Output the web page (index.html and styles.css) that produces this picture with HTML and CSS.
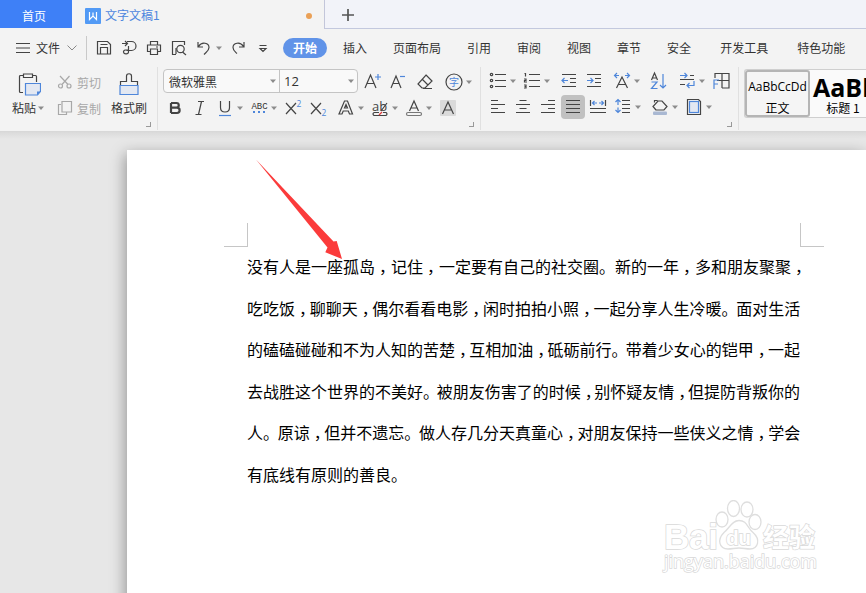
FILE: index.html
```
<!DOCTYPE html>
<html lang="zh-CN">
<head>
    <meta charset="UTF-8">
    <meta name="viewport" content="width=device-width, initial-scale=1.0">
    <title>文字文稿1</title>
    <link rel="stylesheet" href="styles.css">
</head>
<body>
    <svg class="defs">
        <symbol id="caret" viewBox="0 0 9 22"><path d="M1 9.5h6l-3 3.5z" fill="#8c8c8c"/></symbol>
    </svg>

    <div class="tabs">
        <div class="home">首页</div>
        <div class="doc-tab">
            <svg class="logo" viewBox="0 0 16 16"><rect width="16" height="16" rx="1" fill="#529af5"/><path d="M4.500 4v7.500l3.500-3.500 3.500 3.500V4M8 4.500V8" fill="none" stroke="#fff" stroke-width="1.2"/></svg>
            <span>文字文稿1</span>
            <i class="dot"></i>
        </div>
        <div class="tab-rest">
            <svg class="plus" viewBox="0 0 12 12"><path d="M6 0v12M0 6h12" stroke="#555" stroke-width="1.7"/></svg>
        </div>
    </div>

    <div class="menu">
        <svg class="burger" viewBox="0 0 14 10"><path d="M0 .5h14M0 5h14M0 9.5h14" stroke="#444"/></svg>
        <span class="file">文件</span>
        <svg class="chev" viewBox="0 0 10 6"><path d="M.5.5L5 5 9.5.5" fill="none" stroke="#888"/></svg>
        <i class="bar"></i>
        <div class="icons quick">
            <svg viewBox="0 0 22 22"><path d="M4.500 4.500h10l3 3v9.500h-13zM7.500 17v-6.500h7V17M7.500 7.500h7"/></svg>
            <svg viewBox="0 0 22 22"><path d="M4 6.500h5M7 4l2.500 2.500L7 9M9 4.500h4.500a4 4 0 0 1 0 9H8.500M10.500 9v6a2.500 2 0 1 1-3-2h3"/></svg>
            <svg viewBox="0 0 22 22"><path d="M7.500 8V4.500h7V8M7 14.500H4.500V8h13v6.500H15M7.500 12h7v5.500h-7zM13 10h2"/></svg>
            <svg viewBox="0 0 22 22"><path d="M8 17.500H4.500v-13h12V8M14.500 15l3.500 3M8 17v-6"/><circle cx="12.500" cy="12" r="3.700"/></svg>
            <svg class="undo" viewBox="0 0 22 22"><path d="M5 5v5h5M5.500 9.500C9 4 16 6 16 10.500c0 3-2 4-5 7"/></svg>
            <svg class="caret"><use href="#caret"/></svg>
            <svg class="redo" viewBox="0 0 22 22"><path d="M17 5v5h-5M16.500 9.500C13 4 6 6 6 10.500c0 3 2 4 4 6"/></svg>
            <svg viewBox="0 0 22 22"><path d="M7.500 8.500h7M8 11.500h6l-3 3z"/></svg>
        </div>
        <div class="nav">
            <span class="on">开始</span><span>插入</span><span>页面布局</span><span>引用</span><span>审阅</span><span>视图</span><span>章节</span><span>安全</span><span class="dev">开发工具</span><span class="feat">特色功能</span>
        </div>
    </div>

    <div class="ribbon">
        <div class="group clip">
            <div class="big">
                <svg viewBox="0 0 24 24"><path d="M6 3.500H3.500a1 1 0 0 0-1 1v15a1 1 0 0 0 1 1H6M16 3.500h2.500a1 1 0 0 1 1 1V10M6.500 2h9v3.500h-9z"/><path d="M8.500 11.500h15v8l-3 3.500h-12z" fill="#e3e8f2" stroke="#4e86da"/><path d="M20 23v-3.500h3.500z" fill="#4e86da" stroke="none"/></svg>
                <span>粘贴<svg class="caret"><use href="#caret"/></svg></span>
            </div>
            <div class="small">
                <div><svg viewBox="0 0 16 16"><circle cx="3.500" cy="12" r="2"/><circle cx="12" cy="12" r="2"/><path d="M5 10.500L12.500 2M11 10.500L3 2"/></svg>剪切</div>
                <div><svg viewBox="0 0 16 16"><path d="M4 4.500H1.500v10h8V12M5 1.500h9.500V12H5z"/></svg>复制</div>
            </div>
            <div class="big brush">
                <svg viewBox="0 0 24 24"><path d="M3.500 13V9.500h6V4c0-3 5-3 5 0v5.500h6V13"/><path d="M3 13.500h18v9H3z" fill="#e3e8f2" stroke="#4e86da"/></svg>
                <span>格式刷</span>
            </div>
            <i class="launch"></i>
        </div>

        <div class="group font">
            <div class="row">
                <div class="combo">
                    <span class="name">微软雅黑<svg class="caret"><use href="#caret"/></svg></span>
                    <span class="size">12<svg class="caret"><use href="#caret"/></svg></span>
                </div>
                <div class="icons sizes">
                    <svg viewBox="0 0 22 22"><path d="M3 17L8.500 4 14 17M5 12.500h7"/><path class="b" d="M16 3v6M13 6h6"/></svg>
                    <svg viewBox="0 0 22 22"><path d="M3 17L8 5l5 12M5 12.500h6"/><path class="b" d="M12 5.500h5"/></svg>
                    <svg viewBox="0 0 22 22"><path d="M12 4l6 6-7 7H8l-4-4zM8 8l6 6M9 17.500h9"/></svg>
                    <svg class="ring" viewBox="0 0 22 22"><circle cx="11" cy="11" r="8"/><text class="zi" x="11" y="14.800">字</text></svg>
                    <svg class="caret"><use href="#caret"/></svg>
                </div>
            </div>
            <div class="row icons">
                <svg viewBox="0 0 22 22"><path d="M7 6v10M7 6h5.500c3 0 3 4.700 0 4.700H7h6c3.500 0 3.500 5.300 0 5.300H7" stroke-width="2.200"/></svg>
                <svg viewBox="0 0 22 22"><path d="M9 4.500h6M12.500 4.500l-3 13M6.500 17.500h6"/></svg>
                <svg viewBox="0 0 22 22"><path d="M6.500 4v6.500c0 6 9 6 9 0V4"/><path class="b" d="M5 18.500h12"/></svg>
                <svg class="caret"><use href="#caret"/></svg>
                <svg viewBox="0 0 22 22"><text class="abc" x="11.500" y="12">ABC</text><path class="b dash" d="M5 15h13"/></svg>
                <svg class="caret"><use href="#caret"/></svg>
                <svg viewBox="0 0 22 22"><path d="M4 6l10 11M14 6L4 17"/><text class="sup" x="14.500" y="10">2</text></svg>
                <svg viewBox="0 0 22 22"><path d="M4 6l10 11M14 6L4 17"/><text class="sup" x="14.500" y="18.500">2</text></svg>
                <svg class="push" viewBox="0 0 22 22"><path d="M9.500 4h3l5 13h-3l-1.200-3H8.200L7 17H4zM9.500 11h3L11 7.500z"/></svg>
                <svg class="caret"><use href="#caret"/></svg>
                <svg viewBox="0 0 22 22"><text class="ab" x="3" y="14">ab</text><path d="M18 6l-6 8M5 15.500h5M14 15.500h3q2 1.500 0 3H5q-2-1.500 0-3" /><path d="M10 18l3-3" stroke="#e23d3d"/></svg>
                <svg class="caret"><use href="#caret"/></svg>
                <svg viewBox="0 0 22 22"><path d="M6.500 14L11 4l4.500 10M8 11h6"/><rect x="3.500" y="15.500" width="15" height="3" rx="1.500" stroke="#777"/></svg>
                <svg class="caret"><use href="#caret"/></svg>
                <svg viewBox="0 0 22 22"><rect x="3" y="3" width="16" height="16" rx="1" fill="#dadada" stroke="none"/><path d="M5.500 17L11 5l5.500 12M7.500 13h7"/></svg>
            </div>
            <i class="launch"></i>
        </div>

        <div class="group para">
            <div class="row icons">
                <svg viewBox="0 0 22 22"><path d="M8 4.500h11M8 10.500h11M8 16.500h11"/><circle cx="4.500" cy="4.500" r="1.200"/><circle cx="4.500" cy="10.500" r="1.200"/><circle cx="4.500" cy="16.500" r="1.200"/></svg>
                <svg class="caret"><use href="#caret"/></svg>
                <svg viewBox="0 0 22 22"><path d="M8 4.500h11M8 10.500h11M8 16.500h11M3.500 3.500h1v3M3 9h2v1.500H3.500V12H6M3 15h2v3H3M3.500 16.500H5"/></svg>
                <svg class="caret"><use href="#caret"/></svg>
                <svg class="push" viewBox="0 0 22 22"><path d="M4 4.500h14M12 8.500h6M12 12.500h6M4 16.500h14"/><path class="b" d="M10 10.500H4M6.500 8L4 10.500 6.500 13"/></svg>
                <svg viewBox="0 0 22 22"><path d="M4 4.500h14M12 8.500h6M12 12.500h6M4 16.500h14"/><path class="b" d="M4 10.500h6M7.500 8l2.500 2.500L7.500 13"/></svg>
                <svg class="push" viewBox="0 0 22 22"><path d="M5.500 18L11 7l5.500 11M7.500 14.500h7"/><path class="b" d="M8 5.500H3.500M6 3L3.500 5.500 6 8M14 5.500h4.500M16 3l2.500 2.500L16 8"/></svg>
                <svg class="caret"><use href="#caret"/></svg>
                <svg class="az" viewBox="0 0 22 22"><path d="M4.500 10L7.500 3l3 7M5.500 8h4"/><path class="b" d="M4.500 12H10l-5.500 6.500H10.500M16 4v14M13 15l3 3 3-3"/></svg>
                <svg class="tabstop" viewBox="0 0 22 22"><path d="M4 9.500h14M14 5.500h4M4 14.500h5"/><path class="b" d="M4 5.500h7M8.500 3L11 5.500 8.500 8M18 11v4.500h-7M13.500 13L11 15.500l2.500 2.500"/></svg>
                <svg class="caret"><use href="#caret"/></svg>
                <svg viewBox="0 0 22 22"><path d="M5 8V3.500h14V18h-7M12 3.500V18M7 10.500h12"/><path class="b" d="M4 19v-9h5M4 14h4"/></svg>
            </div>
            <div class="row icons">
                <svg viewBox="0 0 22 22"><path d="M4 4.500h7M4 8.500h14M4 12.500h7M4 16.500h14"/></svg>
                <svg viewBox="0 0 22 22"><path d="M7.500 4.500h7M4 8.500h14M7.500 12.500h7M4 16.500h14"/></svg>
                <svg viewBox="0 0 22 22"><path d="M11 4.500h7M4 8.500h14M11 12.500h7M4 16.500h14"/></svg>
                <svg class="active" viewBox="0 0 22 22"><path d="M4 4.500h14M4 8.500h14M4 12.500h14M4 16.500h14"/></svg>
                <svg viewBox="0 0 22 22"><path d="M3.500 4v6M18.500 4v6M3 12.500h16M3 16.500h16"/><path class="b" d="M10 7H5.500M7.500 5l-2 2 2 2M12 7h4.500M14.500 5l2 2-2 2"/></svg>
                <svg viewBox="0 0 22 22"><path d="M10 4.500h8M10 8.500h8M10 12.500h8M10 16.500h8"/><path class="b" d="M6 4v5M3.500 6L6 3.500 8.500 6M6 11.500v5M3.500 14L6 16.500 8.500 14"/></svg>
                <svg class="caret"><use href="#caret"/></svg>
                <svg class="push" viewBox="0 0 22 22"><path d="M5.500 6.500V4.500h3M7 14l-3-3.500L9 5h4l5 5.500L15 14z"/><rect x="4" y="15.500" width="14" height="3.500" rx="1" fill="#a9b8d2" stroke="none"/></svg>
                <svg class="caret"><use href="#caret"/></svg>
                <svg viewBox="0 0 22 22"><path d="M4.500 3.500h11l2 2v13h-13z"/><rect x="6.500" y="5.500" width="9" height="11" fill="#e3e8f2" class="b"/></svg>
                <svg class="caret"><use href="#caret"/></svg>
            </div>
            <i class="launch"></i>
        </div>

        <div class="gallery">
            <div class="style picked"><b class="normal">AaBbCcDd</b><span>正文</span></div>
            <div class="style"><b class="heading">AaBb</b><span>标题 1</span></div>
        </div>
    </div>

    <div class="workspace">
        <div class="page">
            <div class="marks"><i class="left"></i><i class="right"></i></div>
            <div class="text">
                <p class="l1">没有人是一座孤岛<i>，</i>记住<i>，</i>一定要有自己的社交圈。新的一年<i>，</i>多和朋友聚聚<i>，</i></p>
                <p class="l2">吃吃饭<i>，</i>聊聊天<i>，</i>偶尔看看电影<i>，</i>闲时拍拍小照<i>，</i>一起分享人生冷暖<i class="stop">。</i>面对生活</p>
                <p class="l3">的磕磕碰碰和不为人知的苦楚<i>，</i>互相加油<i>，</i>砥砺前行<i class="stop">。</i>带着少女心的铠甲<i>，</i>一起</p>
                <p class="l4">去战胜这个世界的不美好<i class="stop">。</i>被朋友伤害了的时候<i>，</i>别怀疑友情<i>，</i>但提防背叛你的</p>
                <p class="l5">人<i class="stop">。</i>原谅<i>，</i>但并不遗忘<i class="stop">。</i>做人存几分天真童心<i>，</i>对朋友保持一些侠义之情<i>，</i>学会</p>
                <p>有底线有原则的善良。</p>
            </div>
            <svg class="arrow" viewBox="0 0 88 102"><path d="M0 .500L77.500 82.500 80.700 82 86 100 69.300 93.300 71.500 88.500z" fill="#fb3b3b"/></svg>
            <svg class="mark" viewBox="0 0 160 80">
                <g fill="#fff" stroke="#dedede" stroke-width="1.3">
                    <ellipse cx="62" cy="19.500" rx="6" ry="7.500"/>
                    <ellipse cx="73.500" cy="8.500" rx="6" ry="8"/>
                    <ellipse cx="87" cy="9.500" rx="6" ry="7.500"/>
                    <ellipse cx="95" cy="22" rx="6" ry="7.500"/>
                    <path d="M79 20.500c8 0 8 7 14 12 8 7 5 16.500-3 16.500-4 0-7-1-11-1s-7 1-11 1c-9 0-11-9.500-4-16.500 6-5 8-12 15-12z"/>
                </g>
                <text class="bai" x="4" y="48.500" textLength="54">Bai</text>
                <text class="du" x="66" y="44.500" textLength="25">du</text>
                <text class="jy" x="103" y="47" textLength="52">经验</text>
                <text class="url" x="4" y="68" textLength="153">jingyan.baidu.com</text>
            </svg>
        </div>
    </div>
</body>
</html>
```

FILE: styles.css
```
* {
    box-sizing: border-box;
}
body {
    margin: 0;
    height: 593px;
    overflow: hidden;
    display: flex;
    flex-direction: column;
    font: 12px "Noto Sans CJK SC", sans-serif;
    color: #333;
    background: #f3f3f3;
}
svg {
    display: block;
    flex: none;
}
i {
    font-style: normal;
}
.defs {
    position: absolute;
    width: 0;
    height: 0;
}

/* tabs */
.tabs {
    display: flex;
    flex: none;
    height: 29px;
    line-height: 31px;
}
.home {
    width: 72px;
    height: 28px;
    padding-right: 4px;
    text-align: center;
    color: #fff;
    background: #3e80f7;
}
.doc-tab {
    display: flex;
    align-items: center;
    width: 253px;
    padding-left: 9px;
    border-left: 4px solid #f3f3f6;
    border-right: 1px solid #c3c6da;
    color: #4d86de;
}
.logo {
    width: 16px;
    height: 16px;
    margin: 2px 4px 0 0;
}
.dot {
    width: 6px;
    height: 6px;
    margin: 3px 12px 0 auto;
    border-radius: 50%;
    background: #eaa056;
}
.tab-rest {
    flex: 1;
    padding: 9px 17px;
    background: #f2f3f9;
    border-bottom: 1px solid #c3c8de;
}
.plus {
    width: 12px;
    height: 12px;
}

/* menu */
.menu {
    display: flex;
    flex: none;
    align-items: center;
    height: 37px;
    padding-left: 16px;
}
.burger {
    width: 14px;
    height: 10px;
}
.file {
    flex: none;
    margin-left: 6px;
}
.chev {
    width: 10px;
    height: 6px;
    margin-left: 7px;
}
.bar {
    flex: none;
    width: 1px;
    height: 24px;
    margin-left: 9px;
    background: #c9c9c9;
}
.icons {
    display: flex;
    align-items: center;
}
.icons svg {
    width: 22px;
    height: 22px;
    margin-right: 3px;
    fill: none;
    stroke: #444;
    stroke-width: 1.2;
}
svg.caret, .icons svg.caret {
    width: 9px;
    height: 22px;
    margin-left: -3px;
    stroke: none;
}
.icons .b {
    stroke: #4e86da;
}
.icons .dash {
    stroke-width: 2;
    stroke-dasharray: 2 3;
}
.icons text {
    stroke: none;
    fill: #4e86da;
}
.quick {
    margin-left: 6px;
}
.nav {
    display: flex;
    flex: none;
    margin-left: 6px;
    white-space: nowrap;
}
.nav span {
    margin-right: 26px;
    line-height: 20px;
}
.nav .on {
    width: 44px;
    height: 20px;
    margin-right: 16px;
    border-radius: 10px;
    text-align: center;
    font-weight: bold;
    color: #fff;
    background: #6093e8;
}
.nav .dev {
    margin: 0 29px 0 3px;
}
.nav .feat {
    margin-right: 0;
}

/* ribbon */
.ribbon {
    display: flex;
    flex: none;
    height: 66px;
    border-bottom: 1px solid #d8d8d8;
}
.group {
    position: relative;
    flex: none;
    height: 63px;
    margin-top: 1px;
    border-right: 1px solid #e0e0e0;
}
.launch {
    position: absolute;
    right: 6px;
    bottom: 3px;
    width: 5px;
    height: 5px;
    border-right: 1px solid #999;
    border-bottom: 1px solid #999;
}
.clip {
    display: flex;
    width: 158px;
}
.big {
    display: flex;
    flex-direction: column;
    align-items: center;
    width: 34px;
    margin: 5px 0 0 12px;
    white-space: nowrap;
}
.big > svg {
    width: 24px;
    height: 24px;
    fill: none;
    stroke: #444;
    stroke-width: 1.2;
}
.big span {
    display: flex;
    line-height: 22px;
    margin-top: 1px;
}
.big span .caret {
    margin-left: 1px;
}
.small {
    margin: 2px 0 0 11px;
    color: #a8a8a8;
    white-space: nowrap;
}
.small div {
    display: flex;
    align-items: center;
    height: 26px;
}
.small svg {
    width: 16px;
    height: 16px;
    margin-right: 4px;
    fill: none;
    stroke: #a8a8a8;
    stroke-width: 1.2;
}
.brush {
    margin-left: 11px;
}
.font {
    width: 323px;
}
.row {
    display: flex;
    height: 26px;
}
.font > .row:first-child {
    padding: 2px 0 0 5px;
    height: 28px;
}
.combo {
    display: flex;
    width: 195px;
    height: 24px;
    border: 1px solid #c4c4c4;
    border-radius: 4px;
    line-height: 23px;
    background: #f9f9f9;
}
.combo span {
    display: flex;
    justify-content: space-between;
    width: 115px;
    padding: 0 1px 0 5px;
}
.combo .size {
    width: 78px;
    padding-left: 4px;
    border-left: 1px solid #c4c4c4;
    font: 13px/23px "Open Sans", sans-serif;
}
.sizes {
    margin-left: 4px;
}
.sizes svg {
    margin-right: 4px;
}
.sizes .ring {
    margin: 0 3px 0 3px;
}
.font > .row:nth-child(2) {
    padding-left: 6px;
}
.icons .push {
    margin-left: 3px;
}
.zi {
    font-size: 10px;
    text-anchor: middle;
}
.icons .abc {
    font: 9px "Liberation Mono", monospace;
    text-anchor: middle;
    fill: #333;
}
.sup {
    font: 8.5px "Open Sans", sans-serif;
}
.icons .ab {
    font: 13px "Open Sans", sans-serif;
    fill: #444;
}
.para {
    width: 258px;
    padding: 1px 0 0 6px;
}
.icons .az {
    margin-left: 2px;
}
.icons .tabstop {
    margin-left: 4px;
}
.icons .active {
    width: 24px;
    height: 24px;
    margin: 0 2px 0 -1px;
    padding: 1px;
    border-radius: 4px;
    background: #c1c1c1;
}
.gallery {
    display: flex;
    flex: 1;
    overflow: hidden;
    height: 49px;
    margin: 3px 0 0 5px;
    border: 1px solid #cfcfcf;
    border-right: none;
    border-radius: 3px 0 0 3px;
    background: #fafafa;
    color: #000;
}
.style {
    display: flex;
    flex: none;
    flex-direction: column;
    align-items: center;
    width: 66px;
    height: 47px;
    white-space: nowrap;
}
.picked {
    width: 65px;
    border: 2px solid #b5b5b5;
    border-radius: 3px;
    background: #f5f5f5;
}
.style b {
    height: 26px;
    font: 12px/29px "Open Sans", sans-serif;
}
.style span {
    line-height: 19px;
}
.style .heading {
    width: 64px;
    height: 28px;
    margin-left: 4px;
    font: bold 25px/34px "Open Sans", sans-serif;
}

/* document */
.workspace {
    flex: 1;
    padding: 18px 0 0 127px;
    background: linear-gradient(#dadada, #e7e7e7 7px);
}
.page {
    position: relative;
    height: 460px;
    padding: 73px 0 0 97px;
    background: #fff;
    box-shadow: -2px 4px 14px rgba(0, 0, 0, 0.35);
}
.marks {
    display: flex;
    justify-content: space-between;
    width: 600px;
}
.marks i {
    width: 24px;
    height: 24px;
    border-bottom: 1px solid #c6c6c6;
}
.marks .left {
    border-right: 1px solid #c6c6c6;
}
.marks .right {
    border-left: 1px solid #c6c6c6;
}
.text {
    margin: -1px 0 0 23px;
    font-size: 16px;
    line-height: 41.6px;
    white-space: nowrap;
    color: #000;
}
.text p {
    margin: 0;
}
/* commas sit mid-cell, punctuation is squeezed to justify the line */
.text i {
    padding-left: 4px;
    letter-spacing: -4px;
}
.text .l2 i, .text .l5 i {
    letter-spacing: -5.4px;
}
.text .l3 i {
    letter-spacing: -5.8px;
}
.text .l4 i {
    letter-spacing: -6.4px;
}
.text .stop.stop {
    padding-left: 0;
    letter-spacing: -1.4px;
}
.text .l3 .stop.stop {
    letter-spacing: -1.8px;
}
.text .l4 .stop.stop {
    letter-spacing: -2.4px;
}
.arrow {
    position: absolute;
    left: 129px;
    top: 9px;
    width: 88px;
    height: 102px;
}
.mark {
    position: absolute;
    left: 533px;
    top: 350px;
    width: 160px;
    height: 80px;
}
.mark text {
    fill: #fff;
    stroke: #d9d9d9;
    stroke-width: 1.5px;
    paint-order: stroke;
}
.bai {
    font: bold 35px "Liberation Sans", sans-serif;
}
.du {
    font: bold 21px "Liberation Sans", sans-serif;
}
.jy {
    font: bold 26px "Noto Sans CJK SC", sans-serif;
}
.url {
    font: 18px "Open Sans", sans-serif;
}
```
